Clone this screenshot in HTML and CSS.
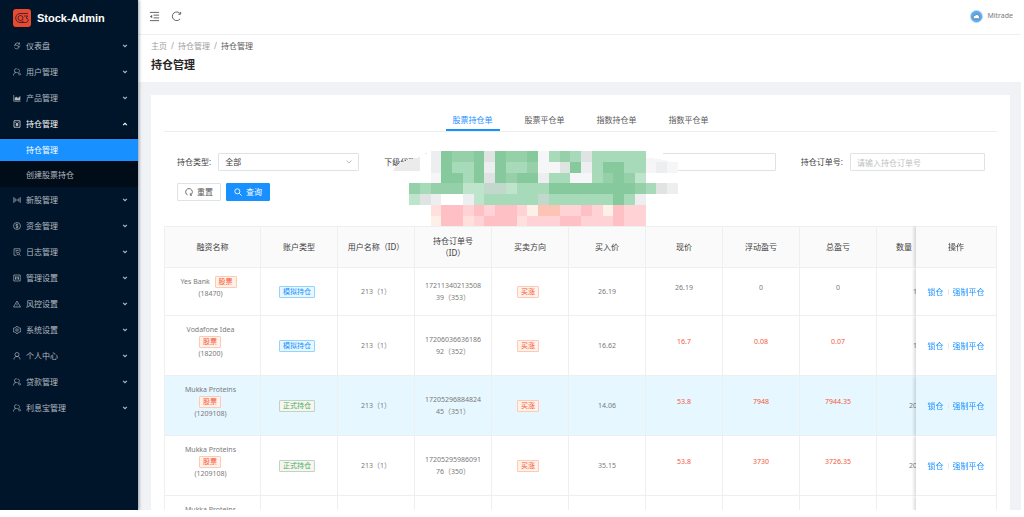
FILE: index.html
```html
<!DOCTYPE html>
<html lang="zh-CN">
<head>
<meta charset="utf-8">
<title>Stock-Admin</title>
<link rel="stylesheet" href="styles.css">
</head>
<body>
<svg class="defs" aria-hidden="true">
  <symbol id="down" viewBox="0 0 8 8"><path d="M1.5 2.5 4 5l2.500-2.500"/></symbol>
  <symbol id="users" viewBox="0 0 16 16"><path d="M6.500 9a3.800 3.800 0 1 1 1-7.500M1 15c0-4 2-6 5.500-6M9 2.500c4-1 5.500 4 2 6M7 9c4 0 5 2 5.500 6M12 9c2 1 3 3 3 5"/></symbol>
</svg>
<div class="app">
  <aside class="side">
    <div class="brand">
      <svg class="logo" viewBox="0 0 18 18"><rect width="18" height="18" rx="3" fill="#e9492f"/><g fill="none" stroke="#4b2230" stroke-width="1"><path d="M11 4.500H7a4.500 4.500 0 1 0 3.500 7.500"/><circle cx="7.500" cy="9" r="2.500"/><path d="M11 4.500h4M11 7h4l-2 2c3 0 3 4.500-.5 4.500h-6"/></g></svg>
      <span>Stock-Admin</span>
    </div>
    <nav class="menu">
      <a class="item" href="#"><svg class="ico" viewBox="0 0 16 16"><path d="M13 4C11 1 5 1 4 5l8 4c1 4-6 7-9 2M2 8l4-3M14 7l-4 4M13 1v3h-3"/></svg><span>仪表盘</span><svg class="arr"><use href="#down"/></svg></a>
      <a class="item" href="#"><svg class="ico"><use href="#users"/></svg><span>用户管理</span><svg class="arr"><use href="#down"/></svg></a>
      <a class="item" href="#"><svg class="ico" viewBox="0 0 16 16"><path d="M1.500 2v12.500H15"/><path class="solid" d="M4 12V8l3-2 3 3 4-4v7z"/></svg><span>产品管理</span><svg class="arr"><use href="#down"/></svg></a>
      <a class="item open" href="#"><svg class="ico" viewBox="0 0 16 16"><path d="M2 1.500h12v13H2zM5 4.500l3 3.500 3-3.500M8 8v4M5.500 8.500h5M5.500 10.500h5"/></svg><span>持仓管理</span><svg class="arr up"><use href="#down"/></svg></a>
      <div class="sub">
        <a class="subitem active" href="#">持仓管理</a>
        <a class="subitem" href="#">创建股票持仓</a>
      </div>
      <a class="item" href="#"><svg class="ico" viewBox="0 0 16 16"><path d="M1.500 2v12M14.500 2v12M4 5l3 3-3 3zM12 5 9 8l3 3z"/></svg><span>新股管理</span><svg class="arr"><use href="#down"/></svg></a>
      <a class="item" href="#"><svg class="ico" viewBox="0 0 16 16"><circle cx="8" cy="8" r="7"/><path d="M10.500 6C9.500 4 5.500 4.500 5.500 6.500S10.500 8 10.500 10 6 12 5.500 10M8 3v10"/></svg><span>资金管理</span><svg class="arr"><use href="#down"/></svg></a>
      <a class="item" href="#"><svg class="ico" viewBox="0 0 16 16"><path d="M7 14.500H2v-13h12V8M5 5h6M5 8h3"/><circle cx="10.500" cy="11" r="2.500"/><path d="m12.500 13 2.500 2"/></svg><span>日志管理</span><svg class="arr"><use href="#down"/></svg></a>
      <a class="item" href="#"><svg class="ico" viewBox="0 0 16 16"><path d="M1.500 2h13v12h-13zM5 4.500v7M8 4.500v7M11 4.500v7M4 9h2M7 6.500h2M10 9h2"/></svg><span>管理设置</span><svg class="arr"><use href="#down"/></svg></a>
      <a class="item" href="#"><svg class="ico" viewBox="0 0 16 16"><path d="M8 2 15 14H1zM8 6.500v4M8 11.500v1.200"/></svg><span>风控设置</span><svg class="arr"><use href="#down"/></svg></a>
      <a class="item" href="#"><svg class="ico" viewBox="0 0 16 16"><path d="M6.500 1h3l.7 2 2.300 1 2-.3L15.500 6 14 8l1.500 2-1 2.300-2-.3-2.300 1-.7 2h-3l-.7-2-2.300-1-2 .3L.5 10 2 8 .5 6l1-2.300 2 .3 2.300-1z"/><circle cx="8" cy="8" r="2.500"/></svg><span>系统设置</span><svg class="arr"><use href="#down"/></svg></a>
      <a class="item" href="#"><svg class="ico" viewBox="0 0 16 16"><circle cx="8" cy="5" r="4"/><path d="M2 15c0-4 2-6 6-6s6 2 6 6"/></svg><span>个人中心</span><svg class="arr"><use href="#down"/></svg></a>
      <a class="item" href="#"><svg class="ico"><use href="#users"/></svg><span>贷款管理</span><svg class="arr"><use href="#down"/></svg></a>
      <a class="item" href="#"><svg class="ico"><use href="#users"/></svg><span>利息宝管理</span><svg class="arr"><use href="#down"/></svg></a>
    </nav>
  </aside>
  <div class="main">
    <header class="top">
      <button class="plain" aria-label="收起菜单"><svg class="tool" viewBox="0 0 12 12"><path d="M1 1.500h10M5 4.500h6M5 7.500h6M1 10.500h10"/><path class="tri" d="M1 6l2.500-2v4z"/></svg></button>
      <button class="plain" aria-label="刷新"><svg class="tool" viewBox="0 0 12 12"><path d="M10 8.500A4.700 4.700 0 1 1 10 3M10.500 1v2.500H8"/></svg></button>
      <div class="user"><svg class="avatar" viewBox="0 0 14 14"><circle cx="7" cy="7" r="6.500" fill="#59abf2" stroke="#b9dcf8"/><path d="M3.500 8c0-2 1.500-2.200 2-2.200C6.500 4 9 4.500 9 6c2 0 2 3.300 0 3.500H5C4 9.500 3.500 9 3.500 8z" fill="#fff"/></svg><span>Mitrade</span></div>
    </header>
    <div class="pagehead">
      <nav class="crumbs"><a href="#">主页</a><span>/</span><a href="#">持仓管理</a><span>/</span><b>持仓管理</b></nav>
      <h1>持仓管理</h1>
    </div>
    <section class="card">
      <div class="tabs" role="tablist">
        <button class="tab on" role="tab" aria-selected="true">股票持仓单</button>
        <button class="tab" role="tab">股票平仓单</button>
        <button class="tab" role="tab">指数持仓单</button>
        <button class="tab" role="tab">指数平仓单</button>
      </div>
      <form class="filters">
        <div class="fields">
          <div class="field"><label for="type">持仓类型:</label><div class="pick"><select id="type"><option>全部</option></select><svg class="caret"><use href="#down"/></svg></div></div>
          <div class="field"><label for="agent">下级代理:</label><input id="agent" type="text"></div>
          <div class="field"><label for="order">持仓订单号:</label><input id="order" type="text" placeholder="请输入持仓订单号"></div>
        </div>
        <div class="actions">
          <button class="btn" type="reset"><svg class="bico" viewBox="0 0 12 12"><path d="M4 10.500a5 5 0 1 1 4 0M8 8v2.800h2.500"/></svg>重置</button>
          <button class="btn primary" type="button"><svg class="bico" viewBox="0 0 12 12"><circle cx="5" cy="5" r="3.800"/><path d="m8 8 3.500 3.500"/></svg>查询</button>
        </div>
      </form>
      <svg class="mosaic" viewBox="0 0 285 76" aria-hidden="true">
        <path fill="#fff" d="M27 6 38 2l10-2h205l39 8-1 18-30 30-6 18H45L15 50V22z"/>
        <path fill="#ebebec" d="M0 21c1-6 12-12 27-14v14z"/>
        <path fill="#f5f5f6" d="M253 8c16 0 28 4 32 9l-4 4h-28z"/>
        <g id="cells"></g>
      </svg>
      <div class="scroll">
        <table>
          <colgroup><col class="c-name"><col span="9" class="c-std"><col class="c-ops"></colgroup>
          <thead><tr><th>融资名称</th><th>账户类型</th><th>用户名称（ID）</th><th>持仓订单号（ID）</th><th>买卖方向</th><th>买入价</th><th>现价</th><th>浮动盈亏</th><th>总盈亏</th><th class="qty">数量</th><th class="ops">操作</th></tr></thead>
          <tbody>
            <tr><td class="name"><p>Yes Bank <em class="tag red">股票</em><br>(18470)</p></td><td><em class="tag blue">模拟持仓</em></td><td>213（1）</td><td>1721134021350839（353）</td><td><em class="tag red">买涨</em></td><td>26.19</td><td><p>26.19</p></td><td><p>0</p></td><td><p>0</p></td><td>1</td><td class="ops"><a href="#">锁仓</a><i></i><a href="#">强制平仓</a></td></tr>
            <tr><td class="name"><p>Vodafone Idea<br><em class="tag red">股票</em><br>(18200)</p></td><td><em class="tag blue">模拟持仓</em></td><td>213（1）</td><td>1720603663618692（352）</td><td><em class="tag red">买涨</em></td><td>16.62</td><td><p class="hot">16.7</p></td><td><p class="hot">0.08</p></td><td><p class="hot">0.07</p></td><td>1</td><td class="ops"><a href="#">锁仓</a><i></i><a href="#">强制平仓</a></td></tr>
            <tr class="hover"><td class="name"><p>Mukka Proteins<br><em class="tag red">股票</em><br>(1209108)</p></td><td><em class="tag green">正式持仓</em></td><td>213（1）</td><td>1720529688482445（351）</td><td><em class="tag red">买涨</em></td><td>14.06</td><td><p class="hot">53.8</p></td><td><p class="hot">7948</p></td><td><p class="hot">7944.35</p></td><td>200</td><td class="ops"><a href="#">锁仓</a><i></i><a href="#">强制平仓</a></td></tr>
            <tr><td class="name"><p>Mukka Proteins<br><em class="tag red">股票</em><br>(1209108)</p></td><td><em class="tag green">正式持仓</em></td><td>213（1）</td><td>1720529598609176（350）</td><td><em class="tag red">买涨</em></td><td>35.15</td><td><p class="hot">53.8</p></td><td><p class="hot">3730</p></td><td><p class="hot">3726.35</p></td><td>200</td><td class="ops"><a href="#">锁仓</a><i></i><a href="#">强制平仓</a></td></tr>
            <tr><td class="name"><p>Mukka Proteins<br><br><br></p></td><td></td><td></td><td></td><td></td><td></td><td></td><td></td><td></td><td></td><td class="ops"></td></tr>
          </tbody>
        </table>
      </div>
    </section>
  </div>
</div>
<script src="mosaic.js"></script>
</body>
</html>
```
FILE: styles.css
```css
* { box-sizing: border-box; }
body { margin: 0; background: #fff; color: #595959; font: 8px/12px "Noto Sans", "Noto Sans CJK SC", sans-serif; }
a { color: inherit; text-decoration: none; }
button, input, select { font: inherit; color: inherit; margin: 0; }
p { margin: 0 0 7px; }
svg { fill: none; stroke: currentColor; }
.defs { display: none; }
.solid { fill: currentColor; }

.app { display: flex; height: calc(100vh - 7px); margin-right: 3px; overflow: hidden; background: #f0f2f5; }
.side { flex: none; width: 138px; background: #001529; color: #b3bac1; box-shadow: 1px 0 3px rgba(0, 21, 41, .4); z-index: 1; }
.brand { display: flex; align-items: center; gap: 6px; height: 33px; padding: 2px 13px 0; color: #fff; font: bold 11px/16px "Liberation Sans", Arial, sans-serif; }
.logo { width: 18px; height: 18px; stroke: none; }
.item { display: flex; align-items: center; gap: 5px; height: 26px; padding: 0 10px 0 13px; }
.item span { flex: 1; }
.item.open { color: #fff; }
.ico { width: 8px; height: 8px; stroke-width: 1.300; }
.arr { width: 6px; height: 6px; stroke-width: 1.500; }
.up { transform: rotate(180deg); }
.sub { background: #000c17; padding: 2px 0 1px; display: grid; gap: 3px; }
.subitem { padding: 5px 26px; line-height: 12px; }
.subitem.active { background: #1890ff; color: #fff; }

.main { flex: 1; min-width: 0; }
.top { display: flex; align-items: center; gap: 11px; height: 35px; padding: 0 8px 2px 11px; background: #fff; border-bottom: 1px solid #eef0f2; }
.plain { display: flex; padding: 0; border: 0; background: none; }
.tool { width: 11px; height: 11px; }
.tri { fill: currentColor; stroke: none; }
.user { display: flex; align-items: center; gap: 4px; margin-left: auto; color: #7a7a7a; font-size: 7px; }
.avatar { width: 13px; height: 13px; }
.pagehead { padding: 5px 13px 9px; background: #fff; }
.crumbs { display: flex; gap: 4px; color: #a0a0a0; }
.crumbs b { color: #595959; font-weight: 400; }
h1 { margin: 4px 0 0; color: #262626; font-size: 11px; line-height: 17px; font-weight: 700; }

.card { position: relative; margin: 13px 11px 0 13px; padding: 13px; background: #fff; }
.tabs { display: flex; justify-content: center; gap: 18px; border-bottom: 1px solid #eceeef; }
.tab { padding: 6px 7px 3px; border: 0; border-bottom: 2px solid transparent; background: none; line-height: 12px; }
.tab.on { color: #1890ff; border-color: #1890ff; }
.filters { padding: 21px 12px 25px 13px; }
.fields { display: grid; grid-template-columns: 182fr 391fr 184fr; gap: 25px; }
.field { display: flex; align-items: center; gap: 7px; color: #404040; }
.field > :last-child { flex: 1; min-width: 0; }
.pick { display: grid; align-items: center; }
.pick > * { grid-area: 1 / 1; }
.caret { width: 8px; height: 8px; margin-right: 6px; justify-self: end; color: #bfbfbf; pointer-events: none; }
input, select { width: 100%; height: 18px; padding: 0 6px; border: 1px solid #dfe3e3; border-radius: 1px; background: #fff; appearance: none; }
input::placeholder { color: #bfbfbf; }
.actions { display: flex; gap: 5px; margin-top: 12px; }
.btn { display: flex; align-items: center; justify-content: center; gap: 4px; width: 44px; height: 18px; padding: 0; border: 1px solid #dfe3e3; border-radius: 1px; background: #fff; }
.btn.primary { background: #1890ff; border-color: #1890ff; color: #fff; }
.bico { width: 8px; height: 8px; stroke-width: 1.300; }
.mosaic { position: absolute; left: 242px; top: 55px; width: 285px; height: 76px; stroke: none; shape-rendering: crispEdges; }

.scroll { overflow-x: auto; border-left: 1px solid #eef0f0; }
table { width: 870px; table-layout: fixed; border-collapse: separate; border-spacing: 0; text-align: center; font-size: 7px; }
.c-name { width: 96px; }
.c-std { width: 77px; }
.c-ops { width: 81px; }
th, td { padding: 8px 9px; border: 0 solid #eef0f0; border-width: 0 1px 1px 0; background: #fff; font-weight: 400; color: #7a7a7a; word-break: break-all; }
th { border-top-width: 1px; background: #fafafa; color: #404040; font-size: 8px; word-break: normal; }
th.qty { padding: 8px 31px 8px 9px; white-space: nowrap; }
.hover td { background: #e6f7ff; }
.hot { color: #f5583c; }
.ops { position: sticky; right: 0; padding: 8px 0; box-shadow: -2px 0 3px rgba(0, 0, 0, .14); clip-path: inset(0 0 0 -6px); }
td.ops { color: #1890ff; font-size: 8px; }
.ops i { display: inline-block; width: 1px; height: 6px; margin: 0 4px; background: #e8e8e8; }
.tag { display: inline-block; margin-right: 4px; padding: 0 3px; border: 1px solid; border-radius: 1px; font-style: normal; font-size: 7px; line-height: 10px; vertical-align: top; }
.name { padding: 8px 12px 8px 8px; }
.name .tag { margin-left: 3px; }
.name p { line-height: 12px; }
.red { color: #f5583c; background: #fff2e8; border-color: #ffc9b5; }
.blue { color: #1890ff; background: #e6f7ff; border-color: #91d5ff; }
.green { color: #3cb371; background: #fcf4ec; border-color: #b5d9c8; }
```
FILE: mosaic.js
```js
const colors = {
  D: "#85c99c", M: "#96d0a9", L: "#a7dab8", l: "#bfe4cc", G: "#dfe4e2", g: "#eceeef",
  n: "#c3d8cc", w: "#f6f6f8", W: "#ffffff", P: "#ffc0c5", p: "#ffd2d5", q: "#ffe0dd",
  c: "#fcf0e9", o: "#fbc4b5"
};
const rows = [
  "..gDMMDGDMMDwLMLGLLLLL...",
  "..gDLLDgDLLMwwGDgLDDLLwgw",
  "..wDDLDGDMDDgLLwwLMDMl...",
  "MLMMMllnnlLLLDDDDDDDDMLGg",
  "lGgWWglLLLLLnLLLLLLDLg...",
  "..qPPpPpPPpcooppPpcPpp...",
  "..cPPqpPPPqpppPPpppPpp..."
];
const size = 10.75;
const group = document.getElementById("cells");
rows.forEach((row, y) => [...row].forEach((key, x) => {
  if (!colors[key]) return;
  const cell = document.createElementNS("http://www.w3.org/2000/svg", "rect");
  cell.setAttribute("x", 16 + x * size);
  cell.setAttribute("y", 1 + y * size);
  cell.setAttribute("width", size);
  cell.setAttribute("height", size);
  cell.setAttribute("fill", colors[key]);
  group.append(cell);
}));
```
